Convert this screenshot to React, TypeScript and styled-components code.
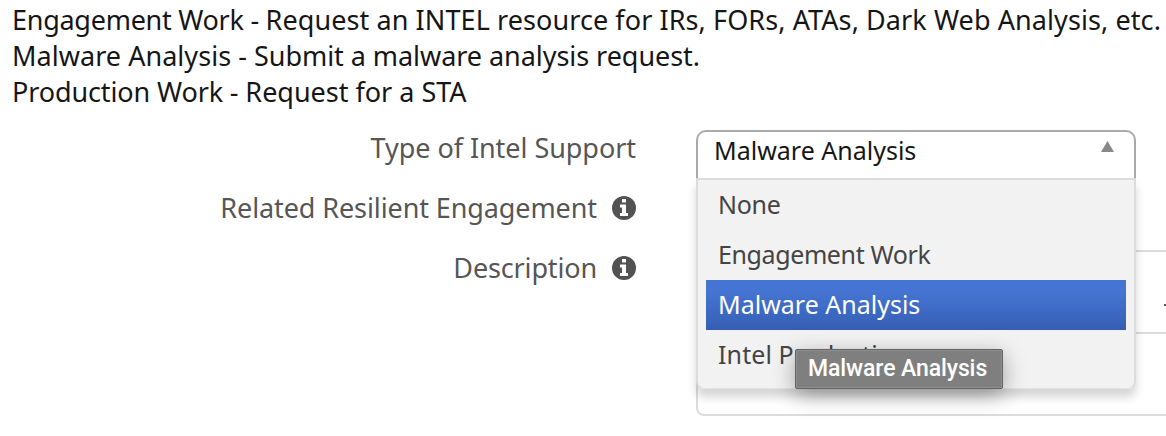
import React from "react";
import styled, { createGlobalStyle } from "styled-components";

const GlobalStyle = createGlobalStyle`
  * { box-sizing: border-box; }
  html, body { margin: 0; padding: 0; background: #fff; }
  body {
    font-family: "Noto Sans", "Open Sans", sans-serif;
    color: #161616;
    overflow: hidden;
  }
`;

const Page = styled.main`
  height: 436px;
  overflow: hidden;
`;

const Intro = styled.div`
  padding: 2px 0 0 12px;
  font-size: 27px;
  line-height: 36px;
`;

const IntroLine = styled.p<{ $tracking?: number }>`
  margin: 0;
  white-space: nowrap;
  letter-spacing: ${(p) => p.$tracking ?? 0}px;
`;

const Term = styled.span<{ $tracking?: number }>`
  letter-spacing: ${(p) => p.$tracking ?? 0}px;
`;

const Form = styled.div`
  display: grid;
  grid-template-columns: 636px 470px;
  column-gap: 60px;
  grid-template-rows: 60px 60px 166px;
  margin-top: 20px;
`;

const Label = styled.div<{ $tracking?: number }>`
  display: flex;
  justify-content: flex-end;
  align-items: center;
  gap: 15px;
  height: 36px;
  font-size: 27px;
  line-height: 36px;
  color: #565656;
  white-space: nowrap;
  letter-spacing: ${(p) => p.$tracking ?? 0}px;
`;

const Field = styled.div`
  position: relative;
  min-width: 0;
`;

const SelectBox = styled.div`
  display: flex;
  justify-content: space-between;
  width: 440px;
  height: 60px;
  padding: 0 20px 0 16px;
  border: 2px solid #a9a9a9;
  border-bottom: 0;
  border-radius: 10px 10px 0 0;
  background: #fff;
  font-size: 25px;
  line-height: 36px;
`;

const Arrow = styled.svg`
  width: 13px;
  height: 11px;
  margin-top: 9px;
  fill: #888;
`;

const Dropdown = styled.ul`
  position: absolute;
  z-index: 2;
  top: 48px;
  left: 0;
  width: 440px;
  height: 211px;
  margin: 0;
  padding: 0 8px 8px;
  list-style: none;
  background: #f2f2f2;
  border: 2px solid #dcdcdc;
  border-bottom: 1px solid #e4e4e4;
  border-radius: 0 0 8px 8px;
  box-shadow: 0 8px 10px rgba(0, 0, 0, 0.17);
`;

const Option = styled.li<{ $selected?: boolean; $tracking?: number }>`
  height: 50px;
  padding-left: 12px;
  font-size: 25px;
  line-height: 49px;
  white-space: nowrap;
  letter-spacing: ${(p) => p.$tracking ?? 0}px;
  color: ${(p) => (p.$selected ? "#fff" : "#444")};
  background: ${(p) =>
    p.$selected ? "linear-gradient(#4575d4 20%, #355fb3 100%)" : "transparent"};
`;

const Tooltip = styled.div`
  position: absolute;
  z-index: 3;
  top: 219px;
  left: 99px;
  width: 208px;
  height: 40px;
  padding-left: 12px;
  border: 1px solid #626262;
  border-radius: 2px;
  background: #7f7f7f;
  box-shadow: inset 0 0 0 1px #8f8f8f, 0 6px 22px rgba(0, 0, 0, 0.34);
  color: #fff;
  font: 500 23px/38px Roboto, "Liberation Sans", sans-serif;
  letter-spacing: -0.1px;
  white-space: nowrap;
`;

const Editor = styled.div`
  width: 520px;
  height: 166px;
  border: 2px solid #dcdcdc;
  border-radius: 8px;
  background: #fff;
`;

const EditorToolbar = styled.div`
  display: flex;
  align-items: center;
  height: 82px;
  padding: 27px 0 0 466px;
  border-bottom: 2px solid #dcdcdc;
`;

const ToolMark = styled.span`
  width: 12px;
  height: 2px;
  margin-bottom: 2px;
  background: #555;
`;

const InfoSvg = styled.svg`
  display: block;
  width: 24px;
  height: 24px;
  flex: none;
`;

function InfoIcon() {
  return (
    <InfoSvg viewBox="0 0 24 24" aria-label="Info">
      <circle cx="12" cy="12" r="12" fill="#525252" />
      <path d="M10 3h4v3.5h-4zM8 8.5h6V17h2v3H8v-3h2v-5.5H8z" fill="#fff" />
    </InfoSvg>
  );
}

export default function App() {
  return (
    <Page>
      <GlobalStyle />
      <Intro>
        <IntroLine $tracking={0.085}>
          <Term $tracking={-0.27}>Engagement Work - </Term>
          Request an INTEL resource for IRs, FORs, ATAs, Dark Web Analysis, etc.
        </IntroLine>
        <IntroLine $tracking={-0.05}>
          <Term $tracking={0.04}>Malware Analysis - </Term>
          Submit a malware analysis request.
        </IntroLine>
        <IntroLine $tracking={-0.01}>
          <Term $tracking={-0.12}>Production Work - </Term>
          Request for a STA
        </IntroLine>
      </Intro>
      <Form>
        <Label $tracking={-0.05}>Type of Intel Support</Label>
        <Field>
          <SelectBox>
            Malware Analysis
            <Arrow viewBox="0 0 13 11">
              <path d="M6.5 0 13 11H0z" />
            </Arrow>
          </SelectBox>
          <Dropdown>
            <Option $tracking={-0.3}>None</Option>
            <Option $tracking={-0.39}>Engagement Work</Option>
            <Option $selected>Malware Analysis</Option>
            <Option $tracking={0.1}>Intel Production</Option>
          </Dropdown>
          <Tooltip>Malware Analysis</Tooltip>
        </Field>
        <Label $tracking={-0.1}>
          Related Resilient Engagement
          <InfoIcon />
        </Label>
        <Field />
        <Label $tracking={-0.15}>
          Description
          <InfoIcon />
        </Label>
        <Field>
          <Editor>
            <EditorToolbar>
              <ToolMark />
            </EditorToolbar>
          </Editor>
        </Field>
      </Form>
    </Page>
  );
}
